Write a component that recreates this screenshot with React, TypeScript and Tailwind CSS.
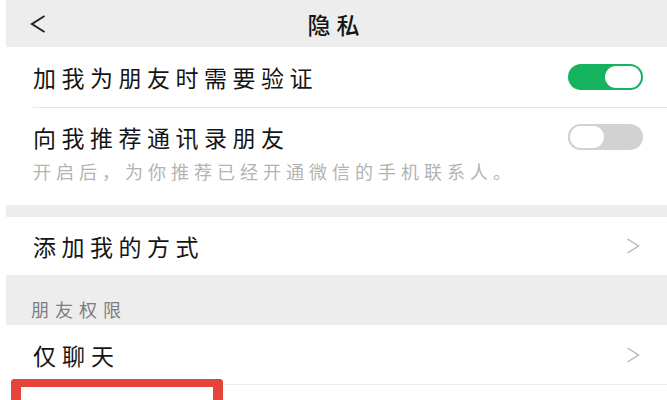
const Chevron = () => (
  <svg width="14" height="16" viewBox="0 0 14 16" fill="none">
    <polyline points="1.5,1 12.5,8 1.5,15" stroke="#b4b4b4" strokeWidth="1.4" />
  </svg>
)

const Toggle = ({ on }: { on: boolean }) => (
  <div
    className={
      on
        ? "w-[75px] h-[26px] rounded-full bg-[#16b35e] flex items-center justify-end p-[2px]"
        : "w-[75px] h-[26px] rounded-full bg-[#d2d2d2] flex items-center justify-start"
    }
  >
    <div
      className={
        on
          ? "w-[36px] h-[22px] rounded-full bg-white"
          : "w-[38px] h-[26px] rounded-full bg-white border-[2px] border-[#d2d2d2]"
      }
    />
  </div>
)

const App = () => {
  return (
    <div
      className="relative w-[667px] h-[400px] overflow-hidden bg-white pl-[6px] text-[#151515]"
      style={{ fontFamily: '"Noto Sans CJK SC", "Noto Sans", sans-serif' }}
    >
      {/* header */}
      <div className="h-[47px] bg-[#ededed] grid grid-cols-[1fr_auto_1fr] items-center pr-[6px]">
        <div className="pl-[24px] flex items-center">
          <svg width="16" height="18" viewBox="0 0 16 18" fill="none">
            <polyline points="14.5,1 2,9 14.5,17" stroke="#222" strokeWidth="2" />
          </svg>
        </div>
        <div className="text-[23px] leading-[30px] tracking-[6px] pl-[6px] font-medium whitespace-nowrap">隐私</div>
        <div />
      </div>

      {/* verification */}
      <div className="pl-[27px]">
        <div className="h-[61px] flex items-center justify-between pr-[24px] border-b border-[#e6e6e6]">
          <span className="text-[23px] leading-[30px] tracking-[5.5px] whitespace-nowrap">加我为朋友时需要验证</span>
          <Toggle on={true} />
        </div>
      </div>

      {/* contacts */}
      <div className="pl-[27px] pr-[24px] pt-[14px] pb-[22px]">
        <div className="flex items-center justify-between">
          <span className="text-[23px] leading-[30px] tracking-[5.5px] whitespace-nowrap">向我推荐通讯录朋友</span>
          <Toggle on={false} />
        </div>
        <div className="mt-[7px] text-[18px] leading-[24px] tracking-[5px] text-[#b3b3b3] whitespace-nowrap">
          开启后，为你推荐已经开通微信的手机联系人。
        </div>
      </div>

      <div className="h-[12px] bg-[#ededed]" />

      <div className="h-[58px] flex items-center justify-between pl-[27px] pr-[27px]">
        <span className="text-[23px] leading-[30px] tracking-[5.5px] whitespace-nowrap">添加我的方式</span>
        <Chevron />
      </div>

      <div className="h-[50px] bg-[#ededed] pl-[25px] pt-[22px]">
        <span className="text-[18px] leading-[24px] tracking-[6px] text-[#7d7d7d] whitespace-nowrap">朋友权限</span>
      </div>

      <div className="pl-[27px]">
        <div className="h-[60px] flex items-center justify-between pr-[27px] border-b border-[#ececec]">
          <span className="text-[23px] leading-[30px] tracking-[6px] whitespace-nowrap">仅聊天</span>
          <Chevron />
        </div>
      </div>

      {/* red annotation box */}
      <div className="absolute left-[11px] top-[379px] w-[212px] h-[40px] border-x-[10px] border-t-[8px] border-[#e4453a] rounded-t-[4px]" />
    </div>
  )
}

export default App
